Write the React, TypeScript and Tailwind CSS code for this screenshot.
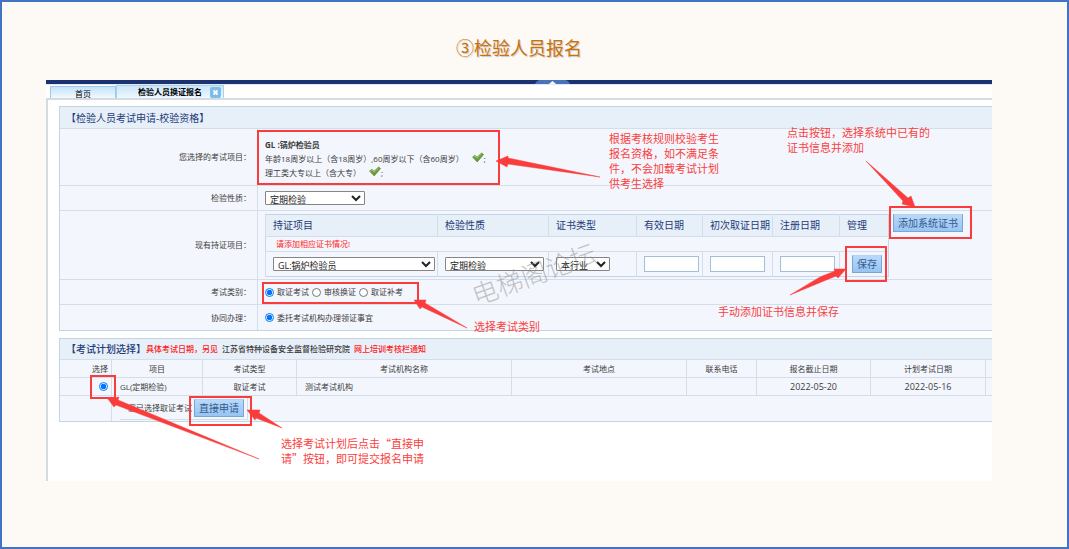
import type { ReactNode } from 'react'

interface FormRowProps {
  label: string
  className: string
  children: ReactNode
}

function FormRow({ label, className, children }: FormRowProps) {
  return (
    <div className={`flex ${className}`}>
      <div className="flex w-[198px] shrink-0 items-center justify-end border-r border-[#d3deea] pr-[6px]">
        {label}
      </div>
      <div className="flex min-w-0 flex-1 items-center pl-[7px]">{children}</div>
    </div>
  )
}

interface RequirementProps {
  text: string
}

function Requirement({ text }: RequirementProps) {
  return (
    <p className="flex h-[14px]">
      {text}
      <svg className="ml-2 h-[11px] w-3" viewBox="0 0 12 10" aria-hidden="true">
        <path d="M0.6 4.6 3 2.8 5 4.8 9.6 0.5 11.5 2 5.2 9.4Z" fill="#6a9f3c" stroke="#47732a" strokeWidth="0.6" />
        <path d="M1.6 4.6 3 3.6 5 5.6 9.6 1.3" fill="none" stroke="#a9cf7c" strokeWidth="0.8" />
      </svg>
      ;
    </p>
  )
}

interface SelectBoxProps {
  label: string
  value: string
  className: string
}

function SelectBox({ label, value, className }: SelectBoxProps) {
  return (
    <select
      aria-label={label}
      className={`block h-[14px] rounded-[1px] border border-[#858585] bg-white text-[9px] leading-3 text-[#222] ${className}`}
    >
      <option>{value}</option>
    </select>
  )
}

function BlueButton({ children }: { children: ReactNode }) {
  return (
    <button
      type="button"
      className="h-[18px] shrink-0 border border-[#7ba5d3] border-t-[#b5d2f0] bg-linear-to-b from-[#b9d9fa] to-[#97c4f3] px-1 text-[10px] leading-4 text-[#365a8c]"
    >
      {children}
    </button>
  )
}

interface RadioProps {
  name: string
  label: string
  defaultChecked?: boolean
}

function Radio({ name, label, defaultChecked = false }: RadioProps) {
  return (
    <label className="flex items-center gap-[3px]">
      <input type="radio" name={name} defaultChecked={defaultChecked} className="size-[9px] accent-[#0075ff]" />
      {label}
    </label>
  )
}

const certColumns = [
  { title: '持证项目', width: 'w-[172px]' },
  { title: '检验性质', width: 'w-[111px]' },
  { title: '证书类型', width: 'w-[88px]' },
  { title: '有效日期', width: 'w-[66px]' },
  { title: '初次取证日期', width: 'w-[70px]' },
  { title: '注册日期', width: 'w-[67px]' },
  { title: '管理', width: 'w-[49px]' },
]

function CertTable() {
  const cell = 'border-l border-[#d3deea] p-0 pl-[7px] text-left'
  return (
    <table className="w-[623px] shrink-0 table-fixed border-collapse border border-[#c3d5e6]">
      <thead>
        <tr className="h-[22px] bg-[#e7eff9] text-[10px] text-[#1f3c78]">
          {certColumns.map((column) => (
            <th key={column.title} className={`${cell} ${column.width} font-normal whitespace-nowrap`}>
              {column.title}
            </th>
          ))}
        </tr>
      </thead>
      <tbody>
        <tr className="h-[15px] border-y border-[#d3deea]">
          <td colSpan={7} className="p-0 pl-[10px] leading-3 text-[#ff1a1a]">
            请添加相应证书情况!
          </td>
        </tr>
        <tr className="h-[25px]">
          <td className={cell}>
            <SelectBox label="持证项目" value="GL:锅炉检验员" className="w-[162px]" />
          </td>
          <td className={cell}>
            <SelectBox label="检验性质" value="定期检验" className="w-[99px]" />
          </td>
          <td className={cell}>
            <SelectBox label="证书类型" value="本行业" className="w-[54px]" />
          </td>
          {['有效日期', '初次取证日期', '注册日期'].map((title) => (
            <td key={title} className={cell}>
              <input
                type="text"
                aria-label={title}
                className="block h-4 w-[55px] border border-[#a6bfd9] bg-white px-1 text-[9px]"
              />
            </td>
          ))}
          <td className="border-l border-[#d3deea] p-0 pl-[12px]">
            <BlueButton>保存</BlueButton>
          </td>
        </tr>
      </tbody>
    </table>
  )
}

const planColumns = [
  { title: '选择', width: 'w-[52px] text-right pr-[3px]' },
  { title: '项目', width: 'w-[91px] text-center' },
  { title: '考试类型', width: 'w-[94px] text-center' },
  { title: '考试机构名称', width: 'w-[215px] text-center' },
  { title: '考试地点', width: 'text-center' },
  { title: '联系电话', width: 'w-[70px] text-center' },
  { title: '报名截止日期', width: 'w-[114px] text-center' },
  { title: '计划考试日期', width: 'w-[115px] text-center' },
  { title: '', width: 'w-[6px]' },
]

function PlanTable() {
  const cell = 'border-r border-b border-[#d3deea] py-0'
  return (
    <table className="w-full table-fixed border-separate border-spacing-0">
      <thead>
        <tr className="h-[18px]">
          {planColumns.map((column) => (
            <th key={column.title} className={`${cell} ${column.width} font-normal last:border-r-0`}>
              {column.title}
            </th>
          ))}
        </tr>
      </thead>
      <tbody>
        <tr className="h-[18px]">
          <td className={`${cell} pr-[3px]`}>
            <input
              type="radio"
              name="plan"
              aria-label="选择"
              defaultChecked
              className="ml-auto block size-[9px] accent-[#0075ff]"
            />
          </td>
          <td className={`${cell} pl-2`}>GL(定期检验)</td>
          <td className={`${cell} text-center`}>取证考试</td>
          <td className={`${cell} pl-2`}>测试考试机构</td>
          <td className={cell}></td>
          <td className={cell}></td>
          <td className={`${cell} text-center text-[9px]`}>2022-05-20</td>
          <td className={`${cell} text-center text-[9px]`}>2022-05-16</td>
          <td className="border-b border-[#d3deea] p-0"></td>
        </tr>
        <tr className="h-[25px]">
          <td className="border-r border-[#d3deea] p-0"></td>
          <td colSpan={8} className="p-0 pl-2">
            <div className="flex h-[22px] w-32 items-center justify-between border-r border-b border-[#d3deea] pr-[3px] pl-2">
              <span className="whitespace-nowrap">您已选择取证考试</span>
              <BlueButton>直接申请</BlueButton>
            </div>
          </td>
        </tr>
      </tbody>
    </table>
  )
}

interface NoteProps {
  className: string
  lines: string[]
}

function Note({ className, lines }: NoteProps) {
  return (
    <p
      lang="zh-CN"
      className={`absolute font-['Noto_Sans_CJK_SC',sans-serif] text-[11px] leading-[15px] whitespace-nowrap text-[#fa4040] ${className}`}
    >
      {lines.map((line) => (
        <span key={line} className="block">
          {line}
        </span>
      ))}
    </p>
  )
}

// Red frames and arrows drawn over the form
function Markup() {
  return (
    <div className="pointer-events-none absolute inset-0">
      <p className="absolute top-[178px] left-[423px] -rotate-20 text-[26px] leading-8 font-light whitespace-nowrap text-[#8c8c8c]/50">
        电梯阁论坛
      </p>
      <svg className="absolute top-0 left-0 h-[401px] w-[946px]" viewBox="46 80 946 401" aria-hidden="true">
        <g fill="none" stroke="#fa3c3c" strokeWidth="2">
          <rect x="258" y="131" width="241" height="53" />
          <rect x="263" y="283" width="155" height="20" />
          <rect x="890" y="207" width="81" height="31" />
          <rect x="846" y="247" width="40" height="34" />
          <rect x="91" y="376" width="24" height="22" />
          <rect x="190" y="397" width="61" height="28" />
        </g>
        <g fill="#fa3c3c" stroke="#fa3c3c" strokeWidth="0.5">
          <path d="M496 161 508 156 508 158 600 177 508 164 507 167Z" />
          <path d="M915 207 911 196 908 198 866 161 903 201 902 204Z" />
          <path d="M846 269 834 269 835 271 820 277 790 295 836 276 838 278Z" />
          <path d="M414 300 426 300 425 303 467 328 422 307 420 309Z" />
          <path d="M108 399 119 397 118 400 259 459 116 405 114 407Z" />
          <path d="M247 410 260 410 259 413 282 428 256 418 255 420Z" />
        </g>
      </svg>
      <Note
        className="top-[51px] left-[563px]"
        lines={['根据考核规则校验考生', '报名资格，如不满足条', '件，不会加载考试计划', '供考生选择']}
      />
      <Note className="top-[45px] left-[741px]" lines={['点击按钮，选择系统中已有的', '证书信息并添加']} />
      <Note className="top-[239px] left-[428px]" lines={['选择考试类别']} />
      <Note className="top-[224px] left-[672px]" lines={['手动添加证书信息并保存']} />
      <Note className="top-[356px] left-[235px]" lines={['选择考试计划后点击“直接申', '请”按钮，即可提交报名申请']} />
    </div>
  )
}

export default function App() {
  return (
    <div className="flex min-h-screen flex-col border-2 border-[#4472c4] bg-[#fdfaf5] pr-[75px] pb-[66px] pl-11 font-['Open_Sans','Noto_Sans_CJK_SC',sans-serif] text-[8px] text-[#3c3c3c]">
      <h1 className="pt-8 pb-[18px] text-center text-[18px] leading-7 text-[#c8710f] [text-shadow:1px_1px_1px_#00000033]">
        ③检验人员报名
      </h1>

      <main className="relative flex flex-1 flex-col overflow-hidden bg-white">
        <div className="flex h-1 justify-center bg-[#1a3172]">
          <svg className="ml-[66px] h-1 w-[35px]" viewBox="0 0 35 4" aria-hidden="true">
            <path d="M0 4Q2 0 5 0H30Q33 0 35 4Z" fill="#4a72b8" />
            <path d="M14 4 17.500 1 21 4Z" fill="#fff" />
          </svg>
        </div>

        {/* 标签页 */}
        <div className="flex h-[14px] items-end border-t border-[#e4e8ee] pl-1 text-black">
          <button
            type="button"
            className="h-3 w-[66px] border border-b-0 border-[#9cc8ea] bg-linear-to-b from-[#c5e3fa] to-[#f1f9ff] leading-[14px]"
          >
            首页
          </button>
          <div className="flex h-[13px] w-[108px] items-center justify-end gap-1 border border-b-0 border-[#a9d2ef] bg-linear-to-b from-[#cbe6fa] to-[#eef8ff] pr-[2px]">
            <button type="button" className="mr-1 font-bold whitespace-nowrap">
              检验人员换证报名
            </button>
            <button type="button" aria-label="关闭" className="size-[11px] rounded-[2px] bg-[#7dbde8]">
              <svg className="size-[11px]" viewBox="0 0 11 11" aria-hidden="true">
                <path d="M3.500 3.500 7.500 7.500M7.500 3.500 3.500 7.500" stroke="#fff" strokeWidth="1.800" />
              </svg>
            </button>
          </div>
        </div>

        <div className="flex-1 border-t-2 border-l-2 border-[#d5dbe0] pt-[6px] pb-[59px] pl-[11px]">
          <section className="divide-y divide-[#d3deea] border-y border-l border-[#c3d5e0] bg-[#f3f6fc]">
            <h2 className="h-[22px] bg-[#e7eff9] pl-[6px] text-[10px] leading-[22px] text-[#1f3c78]">
              【检验人员考试申请-校验资格】
            </h2>
            <FormRow label="您选择的考试项目：" className="min-h-[57px]">
              <div className="pt-1 leading-[14px]">
                <p className="font-bold">GL :锅炉检验员</p>
                <Requirement text="年龄18周岁以上（含18周岁）,60周岁以下（含60周岁）" />
                <Requirement text="理工类大专以上（含大专）" />
              </div>
            </FormRow>
            <FormRow label="检验性质：" className="min-h-[25px]">
              <SelectBox label="检验性质" value="定期检验" className="w-[100px]" />
            </FormRow>
            <FormRow label="现有持证项目：" className="min-h-[69px]">
              <CertTable />
              <div className="self-start pt-[3px] pl-1">
                <BlueButton>添加系统证书</BlueButton>
              </div>
            </FormRow>
            <FormRow label="考试类别：" className="min-h-[25px]">
              <div className="flex gap-[3px]">
                <Radio name="category" label="取证考试" defaultChecked />
                <Radio name="category" label="审核换证" />
                <Radio name="category" label="取证补考" />
              </div>
            </FormRow>
            <FormRow label="协同办理：" className="min-h-[25px]">
              <Radio name="agency" label="委托考试机构办理领证事宜" defaultChecked />
            </FormRow>
          </section>

          <section className="mt-[7px] border-y border-l border-[#c3d5e0] bg-[#f3f6fc]">
            <h2 className="flex h-[21px] items-center border-b border-[#d3deea] bg-[#e7eff9] pl-[6px] font-medium">
              <span className="text-[10px] text-[#1f3c78]">【考试计划选择】</span>
              <span className="text-[#ff1a1a]">具体考试日期，另见</span>
              <span className="px-1">江苏省特种设备安全监督检验研究院</span>
              <span className="text-[#ff1a1a]">网上培训考核栏通知</span>
            </h2>
            <PlanTable />
          </section>
        </div>

        <Markup />
      </main>
    </div>
  )
}
